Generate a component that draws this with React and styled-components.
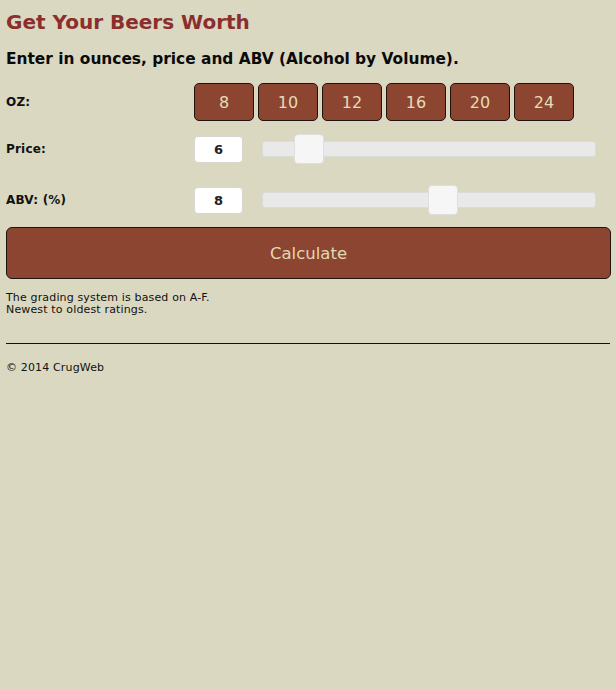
import React from 'react';
import styled, { createGlobalStyle } from 'styled-components';

const Global = createGlobalStyle`
  html, body {
    margin: 0;
    padding: 0;
    background: #dad8c0;
  }
  body {
    font-family: "DejaVu Sans", Verdana, sans-serif;
    color: #111;
  }
`;

const Page = styled.div`
  padding: 10px 5px 0 6px;
  width: 605px;
`;

const Title = styled.h1`
  margin: 0;
  font-size: 20px;
  font-weight: bold;
  color: #8b2e2e;
  line-height: 24px;
`;

const Lead = styled.h2`
  margin: 15px 0 0;
  font-size: 15.4px;
  font-weight: bold;
  line-height: 20px;
  color: #0a0a0a;
`;

const Row = styled.div`
  display: flex;
  align-items: center;
  height: ${p => p.$h}px;
  margin-top: ${p => p.$mt}px;
`;

const Label = styled.label`
  width: 188px;
  flex: none;
  font-size: 12px;
  font-weight: bold;
  letter-spacing: 0.2px;
`;

const OzGroup = styled.div`
  display: flex;
  gap: 4px;
`;

const OzButton = styled.button`
  width: 60px;
  height: 38px;
  padding: 0;
  border: 1px solid #1e1410;
  border-radius: 5px;
  background: #8b4530;
  color: #e6dcb8;
  font-family: "DejaVu Sans", Verdana, sans-serif;
  font-size: 16px;
`;

const NumBox = styled.div`
  width: 49px;
  height: 27px;
  flex: none;
  box-sizing: border-box;
  background: #fff;
  border: 1px solid #d8d6ce;
  border-radius: 4px;
  display: flex;
  align-items: center;
  justify-content: center;
  font-size: 13px;
  font-weight: bold;
  color: #222;
`;

const Track = styled.div`
  position: relative;
  margin: 0 15px 0 19px;
  flex: 1;
  height: 16px;
  box-sizing: border-box;
  background: #e9e9e9;
  border: 1px solid #dcdcd6;
  border-radius: 3px;
`;

const Thumb = styled.div`
  position: absolute;
  top: -8px;
  width: 30px;
  height: 30px;
  box-sizing: border-box;
  background: #f6f6f6;
  border: 1px solid #dedede;
  border-radius: 4px;
`;

const Calc = styled.button`
  display: block;
  width: 100%;
  height: 52px;
  margin-top: 12px;
  border: 1px solid #1e1410;
  border-radius: 6px;
  background: #8b4530;
  color: #e2d8b6;
  font-family: "DejaVu Sans", Verdana, sans-serif;
  font-size: 16.5px;
`;

const Note = styled.p`
  margin: 13px 0 0;
  font-size: 11px;
  line-height: 12px;
  letter-spacing: 0.15px;
  color: #111;
`;

const Rule = styled.hr`
  margin: 27px 0 0;
  width: 604px;
  border: none;
  border-top: 1px solid #111;
`;

const Footer = styled.p`
  margin: 17px 0 0;
  font-size: 11px;
  letter-spacing: 0.15px;
  color: #111;
`;

function Slider({ value, min, max }) {
  const pct = (value - min) / (max - min);
  return (
    <Track>
      <Thumb style={{ left: `calc(${pct} * (100% - 30px))` }} />
    </Track>
  );
}

export default function App() {
  const oz = [8, 10, 12, 16, 20, 24];
  return (
    <Page>
      <Global />
      <Title>Get Your Beers Worth</Title>
      <Lead>Enter in ounces, price and ABV (Alcohol by Volume).</Lead>
      <Row $h={38} $mt={14}>
        <Label>OZ:</Label>
        <OzGroup>
          {oz.map(o => <OzButton key={o}>{o}</OzButton>)}
        </OzGroup>
      </Row>
      <Row $h={30} $mt={13}>
        <Label>Price:</Label>
        <NumBox>6</NumBox>
        <Slider value={6} min={1} max={50} />
      </Row>
      <Row $h={30} $mt={21}>
        <Label>ABV: (%)</Label>
        <NumBox>8</NumBox>
        <Slider value={8} min={0} max={14.6} />
      </Row>
      <Calc>Calculate</Calc>
      <Note>
        The grading system is based on A-F.<br />
        Newest to oldest ratings.
      </Note>
      <Rule />
      <Footer>© 2014 CrugWeb</Footer>
    </Page>
  );
}
